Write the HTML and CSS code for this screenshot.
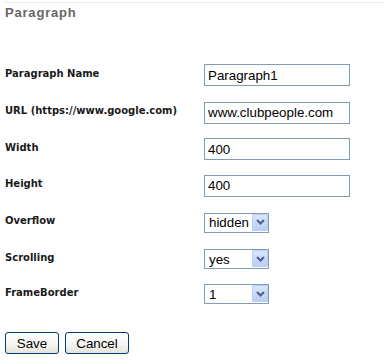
FILE: index.html
```html
<!DOCTYPE html>
<html lang="en">

<head>
    <meta charset="utf-8">
    <title>Paragraph</title>
    <link rel="stylesheet" href="styles.css">
</head>

<body>
    <div class="panel">
        <h2 class="title">Paragraph</h2>

        <form class="fields">
            <label for="name">Paragraph Name</label>
            <input id="name" class="text" type="text" value="Paragraph1">

            <label for="url">URL (https://www.google.com)</label>
            <input id="url" class="text" type="text" value="www.clubpeople.com">

            <label for="width">Width</label>
            <input id="width" class="text" type="text" value="400">

            <label for="height">Height</label>
            <input id="height" class="text" type="text" value="400">

            <label for="overflow">Overflow</label>
            <span class="pick">
                <select id="overflow">
                    <option>hidden</option>
                    <option>auto</option>
                    <option>scroll</option>
                    <option>visible</option>
                </select>
                <span class="arrow"><svg width="9" height="6" viewBox="0 0 9 6"><polyline points="1,1 4.5,4.5 8,1" fill="none" stroke="#4d6185" stroke-width="2"/></svg></span>
            </span>

            <label for="scrolling">Scrolling</label>
            <span class="pick">
                <select id="scrolling">
                    <option>yes</option>
                    <option>no</option>
                    <option>auto</option>
                </select>
                <span class="arrow"><svg width="9" height="6" viewBox="0 0 9 6"><polyline points="1,1 4.5,4.5 8,1" fill="none" stroke="#4d6185" stroke-width="2"/></svg></span>
            </span>

            <label for="frameborder">FrameBorder</label>
            <span class="pick">
                <select id="frameborder">
                    <option>1</option>
                    <option>0</option>
                </select>
                <span class="arrow"><svg width="9" height="6" viewBox="0 0 9 6"><polyline points="1,1 4.5,4.5 8,1" fill="none" stroke="#4d6185" stroke-width="2"/></svg></span>
            </span>
        </form>

        <div class="buttons">
            <button class="btn save" type="button">Save</button>
            <button class="btn cancel" type="button">Cancel</button>
        </div>
    </div>
</body>

</html>
```

FILE: styles.css
```css
* {
    box-sizing: border-box;
}

body {
    margin: 0;
    background: #fff;
}

.panel {
    margin: 2px 2px 0 3px;
    border-top: 1px solid #ededed;
}

.title {
    margin: 0;
    padding: 2px 0 0 2px;
    font-family: "Liberation Sans", Arial, sans-serif;
    font-size: 13px;
    font-weight: bold;
    letter-spacing: 0.8px;
    line-height: 16px;
    color: #666;
}

.fields {
    display: grid;
    grid-template-columns: 201px 150px;
    grid-template-rows: 38px 37px 36px 37px 37px 36px 34px;
    align-items: center;
    margin-top: 35px;
}

.fields label {
    padding-left: 2px;
    padding-bottom: 4px;
    font-family: "DejaVu Sans", Verdana, sans-serif;
    font-size: 10px;
    font-weight: bold;
    color: #1a1a1a;
}

.text {
    width: 146px;
    height: 22px;
    margin: 0;
    padding: 1px 3px;
    border: 1px solid #7f9db9;
    font-family: "Liberation Sans", Arial, sans-serif;
    font-size: 13.33px;
    color: #000;
}

.pick {
    position: relative;
    display: inline-block;
    width: 65px;
    height: 20px;
}

.pick select {
    appearance: none;
    -webkit-appearance: none;
    width: 100%;
    height: 100%;
    margin: 0;
    padding: 0 0 0 4px;
    border: 1px solid #7f9db9;
    border-radius: 0;
    background: #fff;
    font-family: "Liberation Sans", Arial, sans-serif;
    font-size: 13.33px;
    color: #000;
}

.arrow {
    position: absolute;
    top: 1px;
    right: 1px;
    width: 16px;
    height: 17px;
    display: flex;
    align-items: center;
    justify-content: center;
    border: 1px solid #bccdf2;
    border-radius: 1px;
    background: linear-gradient(#dbe6fd, #b9cdf8);
    pointer-events: none;
}

.buttons {
    display: flex;
    gap: 6px;
    margin-top: 21px;
    padding-left: 2px;
}

.btn {
    height: 22px;
    margin: 0;
    padding: 0;
    border: 1px solid #003c74;
    border-radius: 3px;
    background: linear-gradient(#ffffff, #f4f4f0 60%, #e3e3db);
    font-family: "Liberation Sans", Arial, sans-serif;
    font-size: 13.33px;
    color: #000;
}

.save {
    width: 54px;
}

.cancel {
    width: 64px;
}
```
